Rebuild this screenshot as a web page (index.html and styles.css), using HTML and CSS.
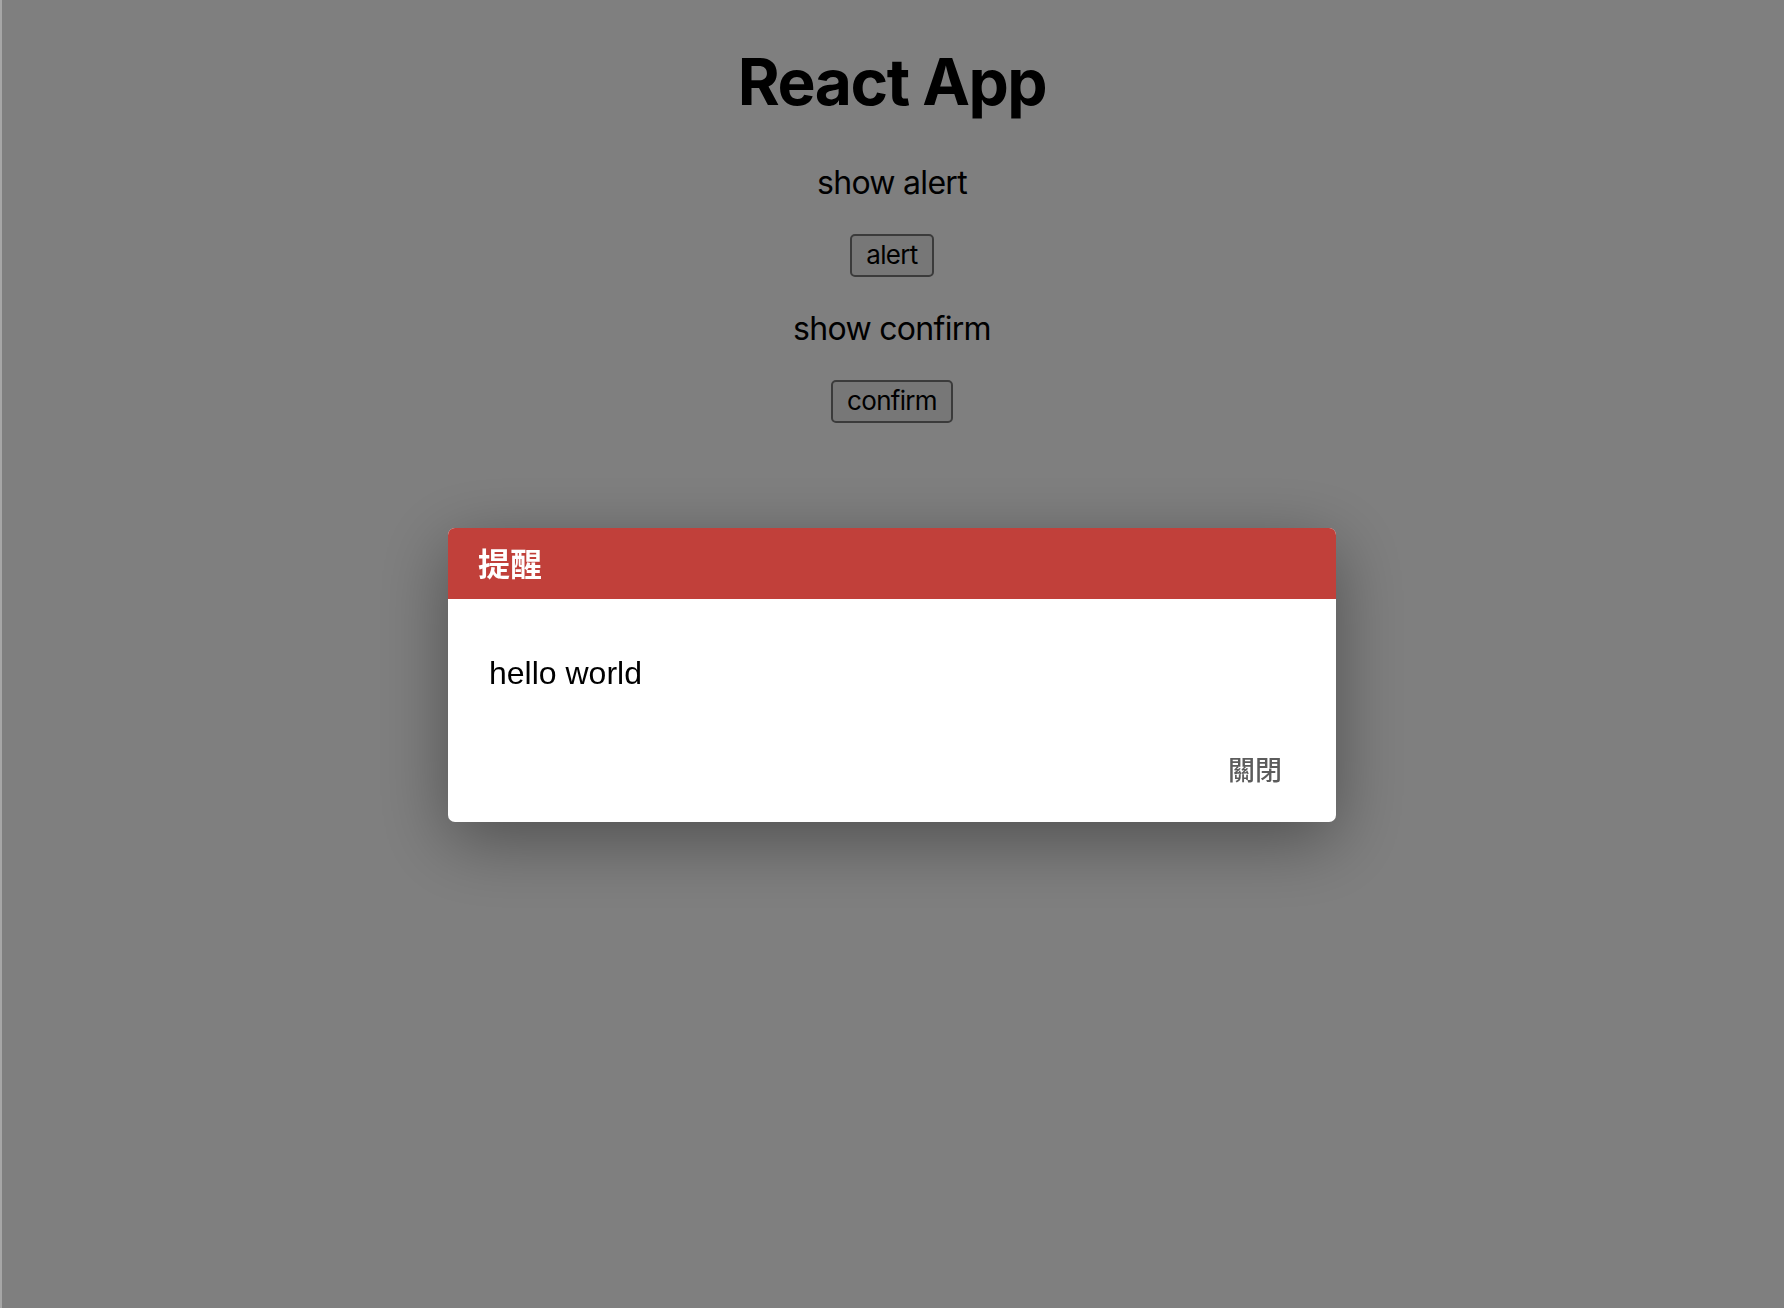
FILE: index.html
```html
<!DOCTYPE html>
<html lang="zh-Hant">
<head>
<meta charset="utf-8">
<title>React App</title>
<link rel="stylesheet" href="styles.css">
</head>
<body>
<div class="app">
  <h1 class="title">React App</h1>
  <p class="label">show alert</p>
  <div class="btn-row"><button class="btn">alert</button></div>
  <p class="label">show confirm</p>
  <div class="btn-row"><button class="btn">confirm</button></div>
</div>
<div class="overlay">
  <div class="modal">
    <div class="modal-header">提醒</div>
    <div class="modal-body">
      <p class="modal-text">hello world</p>
    </div>
    <div class="modal-footer">
      <button class="modal-close">關閉</button>
    </div>
  </div>
</div>
</body>
</html>
```
FILE: styles.css
```css
html, body {
  margin: 0;
  padding: 0;
  background: #ffffff;
}
body {
  font-family: Inter, "Noto Sans", "Noto Sans CJK TC", sans-serif;
  color: #000;
}
.app {
  text-align: center;
  padding-top: 1px;
}
.title {
  font-size: 64px;
  font-weight: 700;
  line-height: 78px;
  margin: 42px 0 0;
  letter-spacing: -1.5px;
}
.label {
  font-size: 32px;
  line-height: 39px;
  margin: 42px 0 32px;
  letter-spacing: -0.7px;
}
.btn-row + .label {
  margin-top: 32px;
}
.btn-row {
  height: 43px;
}
.btn {
  height: 43px;
  box-sizing: border-box;
  font-family: Inter, "Noto Sans", sans-serif;
  font-size: 26px;
  line-height: 1;
  letter-spacing: -0.7px;
  padding: 0 14px 2px;
  border: 2px solid #767676;
  border-radius: 5px;
  background: #efefef;
  color: #000;
}
.overlay {
  position: fixed;
  inset: 0;
  background: rgba(0, 0, 0, 0.5);
  box-shadow: inset 2px 0 0 rgba(255, 255, 255, 0.3);
  display: flex;
  justify-content: center;
  align-items: flex-start;
  padding-top: 528px;
  box-sizing: border-box;
}
.modal {
  width: 888px;
  background: #ffffff;
  border-radius: 7px;
  overflow: hidden;
  box-shadow: 0 18px 70px rgba(0, 0, 0, 0.38);
}
.modal-header {
  height: 71px;
  box-sizing: border-box;
  background: #c1403a;
  color: #ffffff;
  display: flex;
  align-items: center;
  padding: 0 0 3px 30px;
  font-family: "Noto Sans CJK TC", "Noto Sans CJK SC", sans-serif;
  font-size: 32px;
  font-weight: 700;
}
.modal-body {
  padding: 56px 41px 0;
}
.modal-text {
  margin: 0;
  font-family: "Liberation Sans", Arial, sans-serif;
  font-size: 32px;
  line-height: 37px;
  color: #000;
}
.modal-footer {
  display: flex;
  justify-content: flex-end;
  padding: 57px 40px 33px;
}
.modal-close {
  height: 40px;
  padding: 0 14px;
  border: none;
  background: transparent;
  font-family: "Noto Sans CJK TC", "Noto Sans CJK SC", sans-serif;
  font-size: 27px;
  font-weight: 500;
  line-height: 40px;
  color: #5c5c5c;
}
```
